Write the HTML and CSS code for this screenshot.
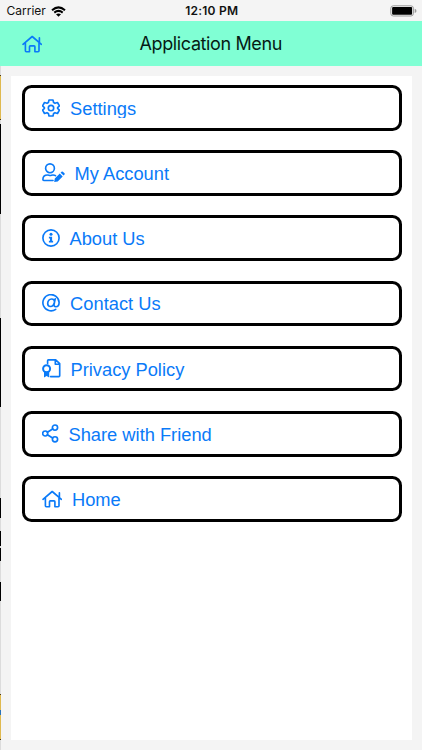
FILE: index.html
```html
<!DOCTYPE html>
<html lang="en">
<head>
<meta charset="utf-8">
<title>Application Menu</title>
<link rel="stylesheet" href="styles.css">
</head>
<body>
<svg width="0" height="0" class="defs">
  <symbol id="house" viewBox="0 0 20.5 18"><path d="M1 9.3 10.2 1.5l9.2 7.8M3.4 8.2v7.6q0 .9.9.9h3.2v-5q0-.8.8-.8h3.8q.8 0 .8.8v5h3.2q.9 0 .9-.9V8.2M17.4 7V2.8"/></symbol>
</svg>
<div class="screen">
  <header class="status">
    <div class="carrier"><span>Carrier</span>
      <svg class="wifi" viewBox="0 0 15 11"><path d="M1 4.2Q7.5-1.4 14 4.2M3.3 6.6q4.2-3.4 8.4 0"/><path class="solid" d="M5 8.3q2.5-1.8 5 0L7.5 10.8z"/></svg>
    </div>
    <div class="time">12:10 PM</div>
    <svg class="battery" viewBox="0 0 27 12"><rect class="case" x=".8" y=".8" width="22.6" height="10.2" rx="2.5"/><rect class="charge" x="2.1" y="2.1" width="20" height="7.6" rx="1"/><path class="tip" d="M24.7 3.8q1.8.5 1.8 2.1t-1.8 2.1z"/></svg>
  </header>
  <nav class="navbar">
    <svg class="icon nav-home"><use href="#house"/></svg>
    <h1>Application Menu</h1>
  </nav>
  <main class="panel">
    <a class="item settings"><svg class="icon" viewBox="0 0 18 18"><path d="M7 1h4l.6 2.5 1.4.8 2.5-.8 1.9 3.4-1.8 1.7v.8l1.8 1.7-1.9 3.4-2.5-.8-1.4.8L11 17H7l-.6-2.5-1.4-.8-2.5.8-1.9-3.4 1.8-1.7v-.8L.6 6.9l1.9-3.4 2.5.8 1.4-.8z"/><circle cx="9" cy="9" r="2.7"/></svg><span>Settings</span></a>
    <a class="item account"><svg class="icon" viewBox="0 0 24 19"><circle cx="8" cy="5.3" r="4.4"/><path d="M11 17.5H1.8Q.9 17.5.9 16.6c0-3 2-4.6 4.6-4.6 1.4 0 1.6.5 2.7.5 1.2 0 1.5-.5 2.8-.5 1.1 0 1.8.2 2.5.7"/><path class="solid" d="m12.8 15.5 5-5 2.9 2.9-5 5-3.5.5zM18.6 9.7l.9-.9q.7-.7 1.4 0l1.6 1.4q.7.7 0 1.4l-.9.9z"/></svg><span>My Account</span></a>
    <a class="item about"><svg class="icon" viewBox="0 0 18 18"><circle cx="9" cy="9" r="8.1"/><circle class="solid" cx="9" cy="5.2" r="1.5"/><path class="solid" d="M6.9 7.7h3.2v4.1h1v1.7H6.9v-1.7H8V9.4H6.9z"/></svg><span>About Us</span></a>
    <a class="item contact"><svg class="icon at" viewBox="0 0 18 18"><path d="M13.7 15.3A8.1 8.1 0 1 1 17.1 8.5c0 2.8-1.4 4.2-3.2 4.2-1.6 0-2.1-.9-1.8-2.4l1.1-5.5M12.4 8.2c-.5 2.8-1.9 4.3-3.9 4.3-1.8 0-2.8-1.2-2.8-3 0-2.6 1.6-4.5 3.9-4.5 2.1 0 3.1 1.2 2.8 3.2z"/></svg><span>Contact Us</span></a>
    <a class="item privacy"><svg class="icon" viewBox="0 0 19 19"><path d="M5.6 4.6V1.7Q5.6.9 6.4.9h7.3l4 3.8v12q0 .9-.9.9H8.5M13.3 1v4.2h4.3"/><circle class="thick" cx="4.6" cy="9.8" r="3.5"/><path class="solid" d="M2 12.8h5.2v5.8l-2.6-1.5L2 18.6z"/></svg><span>Privacy Policy</span></a>
    <a class="item share"><svg class="icon" viewBox="0 0 17 19"><circle cx="3.2" cy="9.5" r="2.5"/><circle cx="13" cy="3.6" r="2.6"/><circle cx="13" cy="15.3" r="2.6"/><path d="m5.4 8.2 5.2-3.2M5.4 10.8l5.2 3.2"/></svg><span>Share with Friend</span></a>
    <a class="item home"><svg class="icon"><use href="#house"/></svg><span>Home</span></a>
  </main>
  <div class="edge"></div>
</div>
</body>
</html>
```
FILE: styles.css
```css
* { box-sizing: border-box; }
body { margin: 0; background: #f4f4f4; }
.defs { display: none; }
.screen {
  position: relative;
  width: 422px;
  height: 750px;
  overflow: hidden;
  font-family: "Liberation Sans", Arial, sans-serif;
}
.status {
  height: 21px;
  display: grid;
  grid-template-columns: 1fr auto 1fr;
  align-items: center;
  padding: 1px 5px 0 6.5px;
  font: 12px/20px Inter, sans-serif;
  color: #111;
}
.carrier { display: flex; align-items: center; gap: 5px; }
.wifi { width: 15px; height: 11px; fill: none; stroke: #000; stroke-width: 2; }
.wifi .solid { fill: #000; stroke: none; }
.time { font-weight: 600; letter-spacing: .25px; }
.battery { width: 27px; height: 12px; justify-self: end; }
.case { fill: none; stroke: #999; stroke-width: 1; }
.charge { fill: #000; }
.tip { fill: #999; }
.navbar {
  height: 45px;
  background: #80ffd4;
  display: grid;
  grid-template-columns: 1fr auto 1fr;
  align-items: center;
  padding: 0 22px 0 21.5px;
}
.navbar h1 {
  margin: 0;
  font: 400 18px/24px Inter, sans-serif;
  letter-spacing: -.38px;
  color: #061b14;
}
.icon {
  flex: none;
  width: 18px;
  height: 18px;
  fill: none;
  stroke: #0a7af8;
  stroke-width: 1.65;
  stroke-linejoin: round;
  stroke-linecap: round;
}
.icon .solid { fill: #0a7af8; stroke: none; }
.icon .thick { stroke-width: 2; }
.nav-home { width: 20.5px; }
.panel {
  margin: 10px 10px 0 11px;
  height: 664px;
  padding: 9px 10px 0 10.5px;
  background: #fff;
  display: flex;
  flex-direction: column;
  gap: 19.6px;
}
.item {
  flex: none;
  height: 45.6px;
  border: 3px solid #000;
  border-radius: 9.5px;
  padding-left: 17px;
  display: flex;
  align-items: center;
  gap: 10px;
  color: #0a7af8;
  font-size: 18.3px;
}
.item span { line-height: 22px; padding-top: 2px; white-space: nowrap; }
.item.settings, .item.contact { gap: 10.6px; }
.item.account { gap: 9px; }
.settings span { height: 20px; line-height: 20px; padding-top: 1px; overflow: hidden; }
.account .icon { width: 24px; height: 19px; }
.privacy .icon { width: 19px; height: 19px; }
.share .icon { width: 17px; height: 19px; }
.home .icon { width: 20.5px; }
.edge {
  position: absolute;
  left: 0;
  top: 0;
  width: 1px;
  height: 750px;
  background: linear-gradient(
    transparent 66px, #dcdcdc 66px 75px, #4d3b16 75px 76px, #dfb94f 76px 119px,
    #4d3b16 119px 120px, #dcdcdc 120px 124px, #000 124px 214px, #dcdcdc 214px 318px,
    #000 318px 407px, #dcdcdc 407px 498px, #000 498px 518px, #dcdcdc 518px 531px,
    #000 531px 546px, #dcdcdc 546px 548px, #000 548px 561px, #dcdcdc 561px 582px,
    #000 582px 601px, #dcdcdc 601px 694px, #4d3b16 694px 695px, #dfb94f 695px 710px,
    #2871b8 710px 715px, #dfb94f 715px 739px, #4d3b16 739px 740px, #dcdcdc 740px);
}
```
